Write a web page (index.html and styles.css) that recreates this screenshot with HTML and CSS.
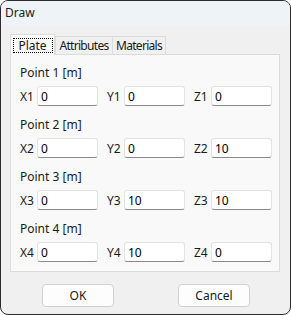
FILE: index.html
```html
<!DOCTYPE html>
<html lang="en">
<head>
    <meta charset="UTF-8">
    <title>Draw</title>
    <link rel="stylesheet" href="styles.css">
</head>
<body>
    <div class="window">
        <div class="titlebar">Draw</div>

        <div class="content">
            <div class="tabs">
                <div class="tab active"><span class="focus">Plate</span></div>
                <div class="tab tab-attr">Attributes</div>
                <div class="tab tab-mat">Materials</div>
            </div>

            <div class="panel">
                <div class="group">
                    <div class="group-title">Point 1 [m]</div>
                    <div class="row">
                        <label>X1</label><input type="text" value="0">
                        <label>Y1</label><input type="text" value="0">
                        <label>Z1</label><input type="text" value="0">
                    </div>
                </div>
                <div class="group">
                    <div class="group-title">Point 2 [m]</div>
                    <div class="row">
                        <label>X2</label><input type="text" value="0">
                        <label>Y2</label><input type="text" value="0">
                        <label>Z2</label><input type="text" value="10">
                    </div>
                </div>
                <div class="group">
                    <div class="group-title">Point 3 [m]</div>
                    <div class="row">
                        <label>X3</label><input type="text" value="0">
                        <label>Y3</label><input type="text" value="10">
                        <label>Z3</label><input type="text" value="10">
                    </div>
                </div>
                <div class="group">
                    <div class="group-title">Point 4 [m]</div>
                    <div class="row">
                        <label>X4</label><input type="text" value="0">
                        <label>Y4</label><input type="text" value="10">
                        <label>Z4</label><input type="text" value="0">
                    </div>
                </div>
            </div>

            <div class="buttons">
                <button>OK</button>
                <button>Cancel</button>
            </div>
        </div>
    </div>
</body>
</html>
```

FILE: styles.css
```css
:root {
    --border-dark: #2b2b2b;
    --title-bg: #eef3f8;
    --dialog-bg: #f0f0f0;
    --panel-bg: #f9f9f9;
    --line: #dcdcdc;
    --text: #1a1a1a;
}

* {
    margin: 0;
    padding: 0;
    box-sizing: border-box;
}

body {
    font-family: "Noto Sans", "Open Sans", sans-serif;
    font-size: 12px;
    color: var(--text);
    background: #ffffff;
}

.window {
    width: 291px;
    height: 315px;
    border: 1px solid var(--border-dark);
    border-radius: 8px;
    overflow: hidden;
    background-color: var(--dialog-bg);
}

.titlebar {
    height: 24px;
    line-height: 24px;
    padding-left: 4px;
    background-color: var(--title-bg);
}

.content {
    padding: 9px 10px 0 9px;
}

/* Tabs */
.tabs {
    display: flex;
    align-items: flex-end;
    height: 20px;
}

.tab {
    height: 18px;
    line-height: 17px;
    text-align: center;
    white-space: nowrap;
    letter-spacing: -0.7px;
    border: 1px solid var(--line);
    border-bottom: none;
    background-color: #f0f0f0;
}

.tab.active {
    width: 45px;
    height: 21px;
    margin-bottom: -1px;
    padding-top: 2px;
    letter-spacing: 0;
    background-color: var(--panel-bg);
    position: relative;
    z-index: 1;
}

.tab-attr {
    width: 58px;
}

.tab-mat {
    width: 54px;
    margin-left: -1px;
}

.focus {
    display: inline-block;
    width: 40px;
    height: 15px;
    line-height: 13px;
    border: 1px dotted #000;
}

/* Panel */
.panel {
    height: 218px;
    border: 1px solid var(--line);
    background-color: var(--panel-bg);
    padding: 10px 6px 0 9px;
}

.group {
    margin-bottom: 11px;
}

.group-title {
    height: 16px;
    line-height: 16px;
}

.row {
    display: grid;
    grid-template-columns: 17px 61px 26px 61px 26px 61px;
    align-items: center;
    margin-top: 5px;
}

.row label:not(:first-child) {
    margin-left: 9px;
}

.row input {
    width: 61px;
    height: 20px;
    padding: 0 3px;
    font-family: inherit;
    font-size: 12px;
    color: #000;
    background-color: #ffffff;
    border: 1px solid #e3e3e3;
    border-bottom-color: #8a8a8a;
    border-radius: 3px;
    outline: none;
}

/* Buttons */
.buttons {
    display: flex;
    gap: 64px;
    padding-left: 32px;
    margin-top: 12px;
}

.buttons button {
    width: 72px;
    height: 23px;
    font-family: inherit;
    font-size: 12px;
    color: var(--text);
    background-color: #fdfdfd;
    border: 1px solid #d0d0d0;
    border-radius: 4px;
}
```
